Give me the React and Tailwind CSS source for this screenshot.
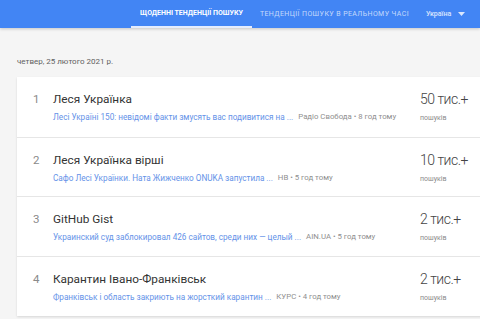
const rows = [
  {
    n: 1,
    title: 'Леся Українка',
    link: 'Лесі Україні 150: невідомі факти змусять вас подивитися на ...',
    source: 'Радіо Свобода • 8 год тому',
    count: '50 тис.+',
  },
  {
    n: 2,
    title: 'Леся Українка вірші',
    link: 'Сафо Лесі Українки. Ната Жижченко ONUKA запустила ...',
    source: 'НВ • 5 год тому',
    count: '10 тис.+',
  },
  {
    n: 3,
    title: 'GitHub Gist',
    link: 'Украинский суд заблокировал 426 сайтов, среди них — целый ...',
    source: 'AIN.UA • 5 год тому',
    count: '2 тис.+',
  },
  {
    n: 4,
    title: 'Карантин Івано-Франківськ',
    link: 'Франківськ і область закриють на жорсткий карантин ...',
    source: 'КУРС • 4 год тому',
    count: '2 тис.+',
  },
];

export default function App() {
  return (
    <div className="w-[480px] h-[319px] overflow-hidden bg-[#f5f5f5] font-['Roboto',sans-serif]">
      {/* Header */}
      <div className="h-[28px] bg-[#4285f4] flex items-stretch shadow-[0_1px_3px_rgba(0,0,0,0.2)]">
        <div className="w-[131px]" />
        <div className="px-[9px] flex items-center border-b-[2px] border-[#e3ecfd] text-[7px] font-bold text-white">
          ЩОДЕННІ ТЕНДЕНЦІЇ ПОШУКУ
        </div>
        <div className="w-[144px] pl-[8px] flex items-center text-[7px] tracking-[0.4px] text-white/70 whitespace-nowrap">
          ТЕНДЕНЦІЇ ПОШУКУ В РЕАЛЬНОМУ ЧАСІ
        </div>
        <div className="ml-[30px] flex items-center gap-[7px] text-[7px] font-medium text-white/80">
          <span>Україна</span>
          <svg width="7" height="4" viewBox="0 0 7 4">
            <path d="M0 0h7L3.5 4z" fill="rgba(255,255,255,0.8)" />
          </svg>
        </div>
      </div>

      <div className="pl-[17px] pt-[28px]">
        <div className="text-[8px] text-[#616161] leading-[12px]">четвер, 25 лютого 2021 р.</div>

        <div className="mt-[9px] w-[480px] bg-white shadow-[0_1px_2px_rgba(0,0,0,0.12)]">
          {rows.map((r, i) => (
            <div
              key={r.n}
              className={`h-[59.7px] flex ${i > 0 ? 'border-t border-[#e6e6e6]' : ''}`}
            >
              <div className="w-[36px] pt-[14px] pl-[16px] text-[11.5px] leading-[16px] text-[#8a8a8a]">{r.n}</div>
              <div className="w-[367px] pt-[14px]">
                <div className="text-[11.8px] leading-[16px] text-[#333333]">{r.title}</div>
                <div className="mt-[4px] flex items-center gap-[5px] leading-[12px] whitespace-nowrap">
                  <span className="text-[8.2px] text-[#6592e8]">{r.link}</span>
                  <span className="text-[7.8px] text-[#8f8f8f]">{r.source}</span>
                </div>
              </div>
              <div className="pt-[13px]">
                <div className="text-[14px] font-light tracking-[-0.5px] leading-[18px] text-[#444444]">{r.count}</div>
                <div className="mt-[4px] text-[7px] leading-[12px] text-[#8a8a8a]">пошуків</div>
              </div>
            </div>
          ))}
        </div>
      </div>
    </div>
  );
}
